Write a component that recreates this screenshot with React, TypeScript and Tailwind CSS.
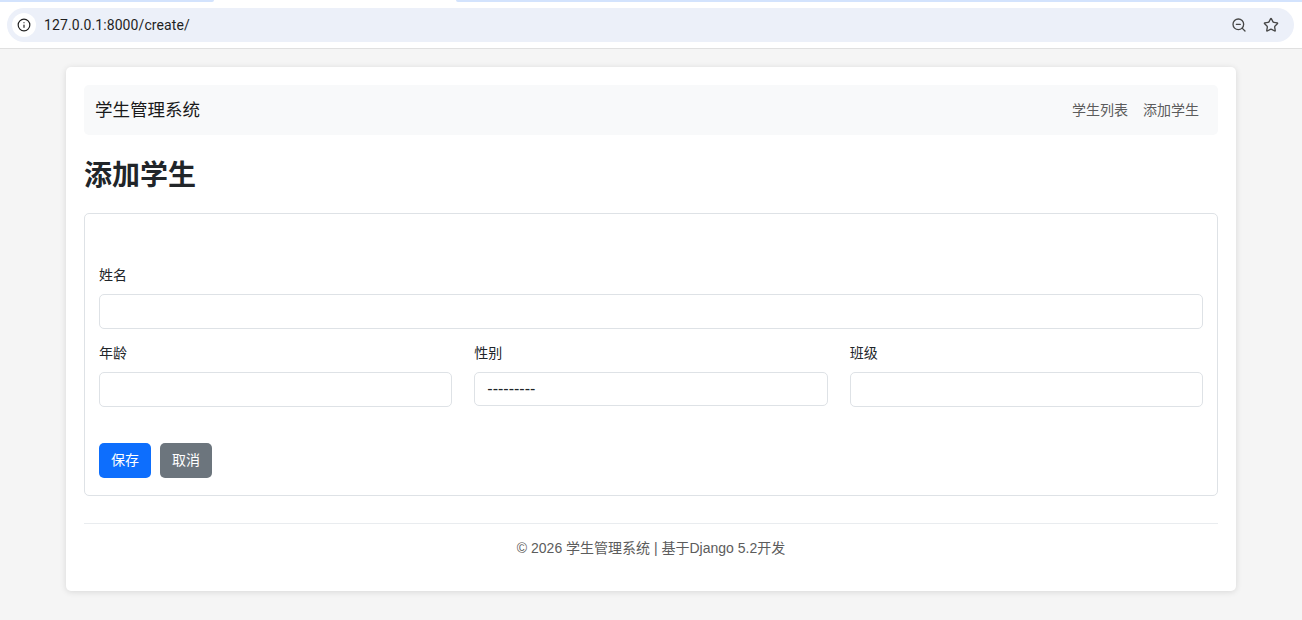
import { Info, Star, ZoomOut } from "lucide-react";

const sans = "font-['Liberation_Sans','Noto_Sans_CJK_SC',sans-serif]";

function Field({ label, className, children }: { label: string; className?: string; children?: React.ReactNode }) {
  return (
    <div className={className}>
      <label className="block h-[21px] mb-2 text-[14px] leading-[21px] text-[#212529]">{label}</label>
      {children ?? <input className="block w-full h-[35px] rounded-[5px] border border-[#dee2e6] bg-white" />}
    </div>
  );
}

function BrowserBar() {
  return (
    <div className="h-[49px] bg-white border-b border-[#e0e0e0] relative shrink-0">
      <div className="absolute left-0 top-0 h-[2px] w-[214px] bg-[#d3e3fd] rounded-br-md" />
      <div className="absolute right-0 top-0 h-[2px] w-[846px] bg-[#d3e3fd] rounded-bl-md" />
      <div className="absolute left-[7px] right-[8px] top-[8px] h-[34px] rounded-full bg-[#ecf0f9] flex items-center pl-[5px] pr-[15px]">
        <div className="w-6 h-6 rounded-full bg-white flex items-center justify-center">
          <Info size={14} strokeWidth={2} className="text-[#1f1f1f]" />
        </div>
        <span className="ml-[8px] font-['Roboto',sans-serif] text-[14px] text-[#1f1f1f] tracking-[0.1px]">127.0.0.1:8000/create/</span>
        <div className="ml-auto flex items-center gap-[16px] text-[#474747]">
          <ZoomOut size={16} strokeWidth={2} />
          <Star size={16} strokeWidth={2} />
        </div>
      </div>
    </div>
  );
}

export default function App() {
  return (
    <div className={`h-[620px] overflow-hidden flex flex-col bg-[#f5f5f5] ${sans}`}>
      <BrowserBar />
      <div className="mx-[66px] mt-[18px] h-[524px] shrink-0 rounded-[5px] bg-white p-[18px] shadow-[0_1px_6px_rgba(0,0,0,0.12)]">
        <nav className="h-[50px] rounded-[5px] bg-[#f8f9fa] flex items-center justify-between pl-[11px] pr-[19px]">
          <span className="text-[17.5px] text-[#1a1a1a]">学生管理系统</span>
          <div className="flex gap-[15px] text-[14px] text-[#5c5c5c]">
            <span>学生列表</span>
            <span>添加学生</span>
          </div>
        </nav>
        <h1 className="mt-[20px] h-[42px] text-[28px] leading-[42px] font-semibold text-[#212529]">添加学生</h1>
        <form className="mt-[16px] h-[283px] rounded-[5px] border border-[#dee2e6] pt-[51px] px-[14px]">
          <Field label="姓名" />
          <div className="mt-[14px] grid grid-cols-3 gap-[22px]">
            <Field label="年龄" />
            <Field label="性别">
              <div className="h-[34px] rounded-[5px] border border-[#dee2e6] bg-white pl-[12px] flex items-center text-[16px] text-[#212529]">
                ---------
              </div>
            </Field>
            <Field label="班级" />
          </div>
          <div className="mt-[36px] flex gap-[9px]">
            <button type="button" className="w-[52px] h-[35px] rounded-[5px] bg-[#0d6efd] text-white text-[14px]">保存</button>
            <button type="button" className="w-[52px] h-[35px] rounded-[5px] bg-[#6c757d] text-white text-[14px]">取消</button>
          </div>
        </form>
        <footer className="mt-[27px] border-t border-[#e9ecef] pt-[14px] text-center text-[14px] leading-[21px] text-[#5c5c5c]">
          © 2026 学生管理系统 | 基于Django 5.2开发
        </footer>
      </div>
    </div>
  );
}
